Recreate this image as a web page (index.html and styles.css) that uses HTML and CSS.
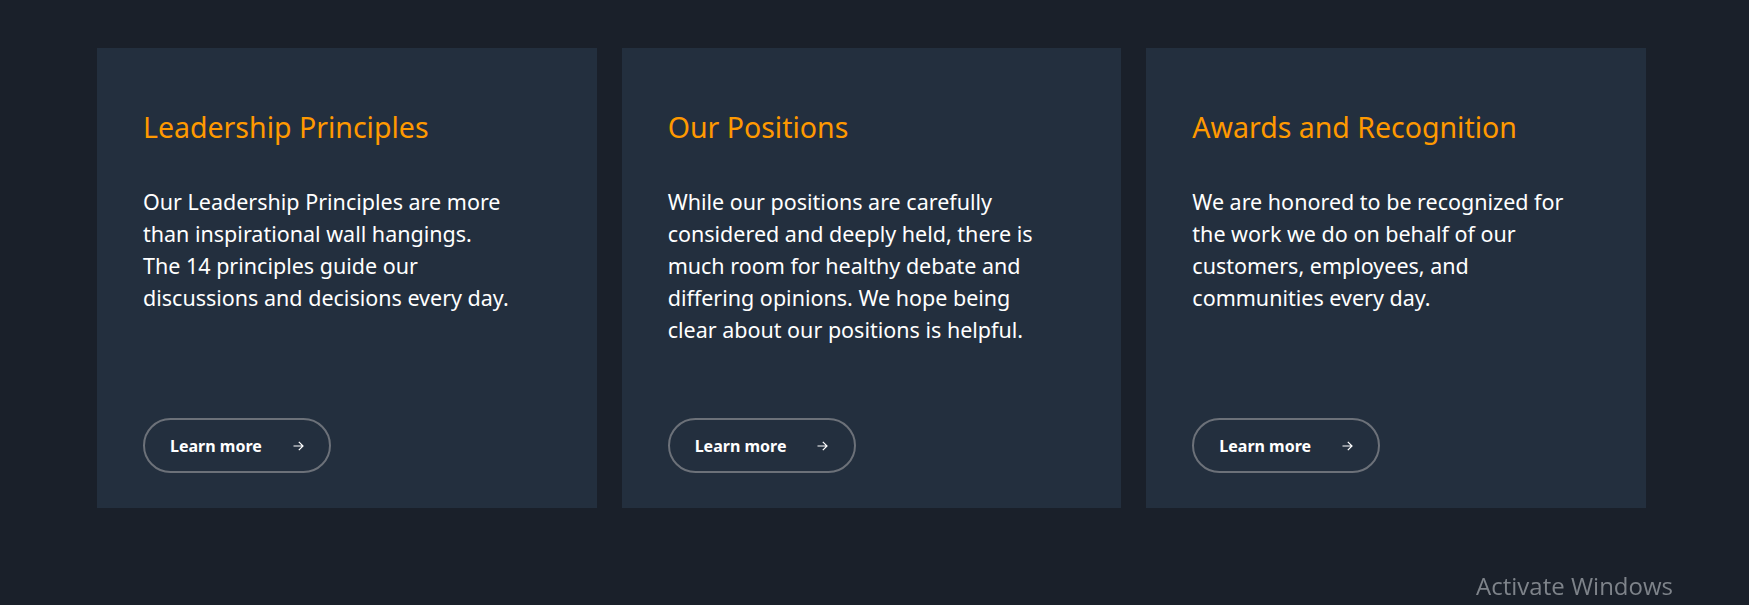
FILE: index.html
```html
<!DOCTYPE html>
<html lang="en">
<head>
<meta charset="utf-8">
<title>Our culture</title>
<link rel="stylesheet" href="styles.css">
</head>
<body>
<main class="section">
  <div class="cards">
    <article class="card">
      <h2 class="card-title">Leadership Principles</h2>
      <p class="card-text">Our Leadership Principles are more<br>than inspirational wall hangings.<br>The 14 principles guide our<br>discussions and decisions every day.</p>
      <a class="btn" href="#">Learn more
        <svg class="arrow" width="11" height="10" viewBox="0 0 11 10" aria-hidden="true"><path d="M0.5 5H10M5.8 0.8L10 5L5.8 9.2" fill="none" stroke="currentColor" stroke-width="1.2"/></svg>
      </a>
    </article>
    <article class="card">
      <h2 class="card-title">Our Positions</h2>
      <p class="card-text">While our positions are carefully<br>considered and deeply held, there is<br>much room for healthy debate and<br>differing opinions. We hope being<br>clear about our positions is helpful.</p>
      <a class="btn" href="#">Learn more
        <svg class="arrow" width="11" height="10" viewBox="0 0 11 10" aria-hidden="true"><path d="M0.5 5H10M5.8 0.8L10 5L5.8 9.2" fill="none" stroke="currentColor" stroke-width="1.2"/></svg>
      </a>
    </article>
    <article class="card">
      <h2 class="card-title">Awards and Recognition</h2>
      <p class="card-text">We are honored to be recognized for<br>the work we do on behalf of our<br>customers, employees, and<br>communities every day.</p>
      <a class="btn" href="#">Learn more
        <svg class="arrow" width="11" height="10" viewBox="0 0 11 10" aria-hidden="true"><path d="M0.5 5H10M5.8 0.8L10 5L5.8 9.2" fill="none" stroke="currentColor" stroke-width="1.2"/></svg>
      </a>
    </article>
  </div>
</main>
<div class="watermark">Activate Windows</div>
</body>
</html>
```
FILE: styles.css
```css
html, body {
  margin: 0;
  height: 100%;
}
body {
  background: #1a202a;
  font-family: "Noto Sans", "Open Sans", sans-serif;
  color: #ffffff;
  overflow: hidden;
}
.section {
  padding: 48px 103px 0 97px;
}
.cards {
  display: grid;
  grid-template-columns: repeat(3, 1fr);
  gap: 25px;
}
.card {
  background: #232f3e;
  min-height: 460px;
  box-sizing: border-box;
  padding: 61px 40px 35px 46px;
  display: flex;
  flex-direction: column;
  align-items: flex-start;
}
.card-title {
  margin: 0;
  font-size: 28.5px;
  line-height: 36px;
  font-weight: 400;
  color: #ff9900;
  white-space: nowrap;
}
.card-text {
  margin: 41px 0 0;
  font-size: 21.5px;
  line-height: 32px;
  white-space: nowrap;
}
.btn {
  margin-top: auto;
  box-sizing: border-box;
  width: 188px;
  height: 55px;
  border: 2px solid #6c7179;
  border-radius: 28px;
  display: flex;
  align-items: center;
  padding-left: 25px;
  gap: 31px;
  color: #ffffff;
  text-decoration: none;
  font-size: 16px;
  font-weight: 700;
}
.arrow {
  display: block;
}
.watermark {
  position: fixed;
  right: 76px;
  bottom: 7px;
  font-family: "Open Sans", "Noto Sans", sans-serif;
  font-size: 24px;
  line-height: 24px;
  color: #7e838a;
}
```
